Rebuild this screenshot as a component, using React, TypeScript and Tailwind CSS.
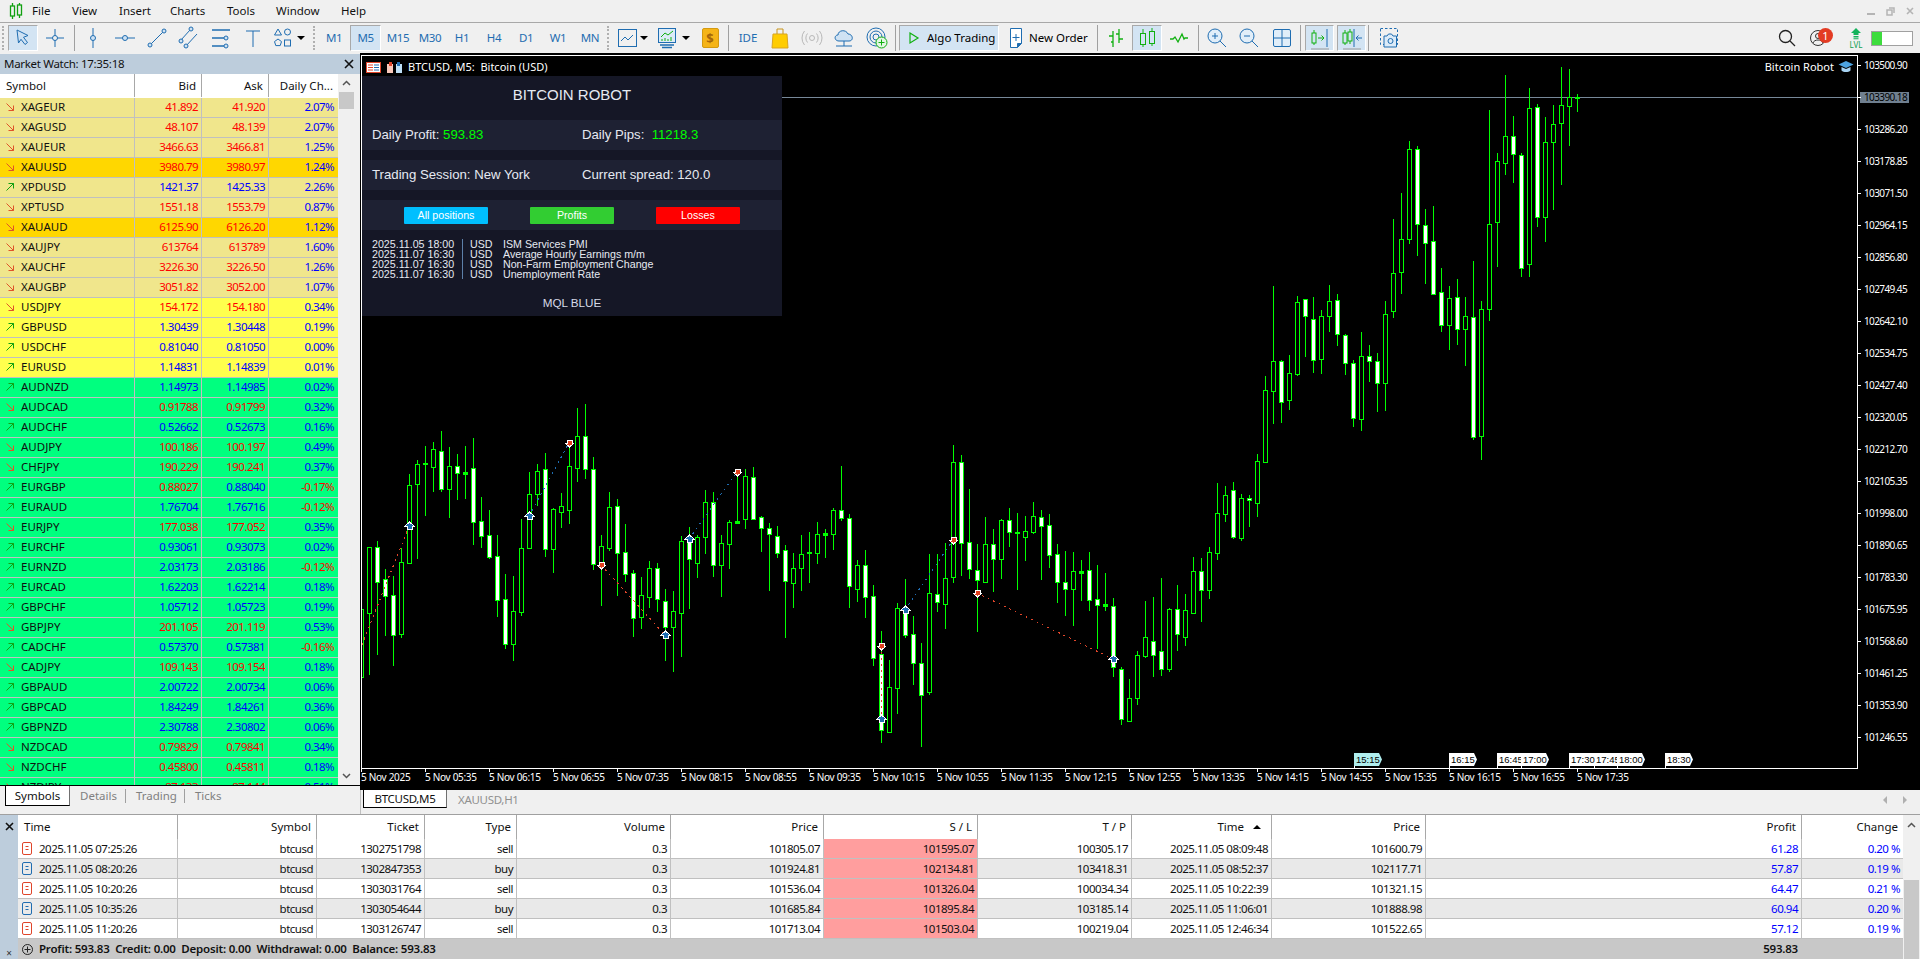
import type { ReactNode } from 'react';

const BLUE = '#1f6db1';
const GREEN = '#10b010';

// ---- market watch ----
type Quote = [string, string, string, string, 'u' | 'd', string, string?];
const QUOTES: Quote[] = [
  ['XAGEUR', '41.892', '41.920', '2.07%', 'd', 'bg-[#f0e68c]'],
  ['XAGUSD', '48.107', '48.139', '2.07%', 'd', 'bg-[#f0e68c]'],
  ['XAUEUR', '3466.63', '3466.81', '1.25%', 'd', 'bg-[#f0e68c]'],
  ['XAUUSD', '3980.79', '3980.97', '1.24%', 'd', 'bg-[#ffd700]'],
  ['XPDUSD', '1421.37', '1425.33', '2.26%', 'u', 'bg-[#f0e68c]'],
  ['XPTUSD', '1551.18', '1553.79', '0.87%', 'd', 'bg-[#f0e68c]'],
  ['XAUAUD', '6125.90', '6126.20', '1.12%', 'd', 'bg-[#ffd700]'],
  ['XAUJPY', '613764', '613789', '1.60%', 'd', 'bg-[#f0e68c]'],
  ['XAUCHF', '3226.30', '3226.50', '1.26%', 'd', 'bg-[#f0e68c]'],
  ['XAUGBP', '3051.82', '3052.00', '1.07%', 'd', 'bg-[#f0e68c]'],
  ['USDJPY', '154.172', '154.180', '0.34%', 'd', 'bg-[#ffff4d]'],
  ['GBPUSD', '1.30439', '1.30448', '0.19%', 'u', 'bg-[#ffff4d]'],
  ['USDCHF', '0.81040', '0.81050', '0.00%', 'u', 'bg-[#ffff4d]'],
  ['EURUSD', '1.14831', '1.14839', '0.01%', 'u', 'bg-[#ffff4d]'],
  ['AUDNZD', '1.14973', '1.14985', '0.02%', 'u', 'bg-[#00ff7f]'],
  ['AUDCAD', '0.91788', '0.91799', '0.32%', 'd', 'bg-[#00ff7f]'],
  ['AUDCHF', '0.52662', '0.52673', '0.16%', 'u', 'bg-[#00ff7f]'],
  ['AUDJPY', '100.186', '100.197', '0.49%', 'd', 'bg-[#00ff7f]'],
  ['CHFJPY', '190.229', '190.241', '0.37%', 'd', 'bg-[#00ff7f]'],
  ['EURGBP', '0.88027', '0.88040', '-0.17%', 'u', 'bg-[#00ff7f]', 'mixed'],
  ['EURAUD', '1.76704', '1.76716', '-0.12%', 'u', 'bg-[#00ff7f]'],
  ['EURJPY', '177.038', '177.052', '0.35%', 'd', 'bg-[#00ff7f]'],
  ['EURCHF', '0.93061', '0.93073', '0.02%', 'u', 'bg-[#00ff7f]'],
  ['EURNZD', '2.03173', '2.03186', '-0.12%', 'u', 'bg-[#00ff7f]'],
  ['EURCAD', '1.62203', '1.62214', '0.18%', 'u', 'bg-[#00ff7f]'],
  ['GBPCHF', '1.05712', '1.05723', '0.19%', 'u', 'bg-[#00ff7f]'],
  ['GBPJPY', '201.105', '201.119', '0.53%', 'd', 'bg-[#00ff7f]'],
  ['CADCHF', '0.57370', '0.57381', '-0.16%', 'u', 'bg-[#00ff7f]'],
  ['CADJPY', '109.143', '109.154', '0.18%', 'd', 'bg-[#00ff7f]'],
  ['GBPAUD', '2.00722', '2.00734', '0.06%', 'u', 'bg-[#00ff7f]'],
  ['GBPCAD', '1.84249', '1.84261', '0.36%', 'u', 'bg-[#00ff7f]'],
  ['GBPNZD', '2.30788', '2.30802', '0.06%', 'u', 'bg-[#00ff7f]'],
  ['NZDCAD', '0.79829', '0.79841', '0.34%', 'd', 'bg-[#00ff7f]'],
  ['NZDCHF', '0.45800', '0.45811', '0.18%', 'd', 'bg-[#00ff7f]'],
  ['NZDJPY', '87.133', '87.144', '0.51%', 'd', 'bg-[#00ff7f]'],
];

// ---- toolbox ----
const DEALS = [
  ['2025.11.05 07:25:26', 'btcusd', '1302751798', 'sell', '0.3', '101805.07', '101595.07', '100305.17', '2025.11.05 08:09:48', '101600.79', '61.28', '0.20 %'],
  ['2025.11.05 08:20:26', 'btcusd', '1302847353', 'buy', '0.3', '101924.81', '102134.81', '103418.31', '2025.11.05 08:52:37', '102117.71', '57.87', '0.19 %'],
  ['2025.11.05 10:20:26', 'btcusd', '1303031764', 'sell', '0.3', '101536.04', '101326.04', '100034.34', '2025.11.05 10:22:39', '101321.15', '64.47', '0.21 %'],
  ['2025.11.05 10:35:26', 'btcusd', '1303054644', 'buy', '0.3', '101685.84', '101895.84', '103185.14', '2025.11.05 11:06:01', '101888.98', '60.94', '0.20 %'],
  ['2025.11.05 11:20:26', 'btcusd', '1303126747', 'sell', '0.3', '101713.04', '101503.04', '100219.04', '2025.11.05 12:46:34', '101522.65', '57.12', '0.19 %'],
];
const DEAL_HEAD = ['Time', 'Symbol', 'Ticket', 'Type', 'Volume', 'Price', 'S / L', 'T / P', 'Time', 'Price', 'Profit', 'Change'];
const DEAL_GRID = 'grid grid-cols-[160px_139px_108px_92px_154px_153px_154px_154px_140px_154px_376px_101px]';

// ---- chart data: wickTop, wickBottom, bodyTop, bodyBottom, kind (0 hollow, 1 filled, 2 doji) ----
type Candle = [number, number, number, number, number];
const groupA: Candle[] = [
  [568, 772, 568, 772, 0], [382, 765, 382, 578, 0], [364, 705, 382, 485, 1], [447, 648, 478, 527, 1], [468, 738, 526, 644, 1],
  [385, 654, 427, 641, 0], [163, 430, 196, 428, 0], [120, 417, 133, 191, 0], [78, 288, 130, 131, 2], [66, 216, 88, 140, 0],
  [33, 216, 94, 206, 1], [81, 294, 139, 206, 0], [102, 240, 139, 158, 1], [78, 237, 157, 161, 2], [54, 375, 145, 305, 1],
  [231, 384, 304, 347, 1], [270, 417, 346, 410, 1], [346, 591, 409, 539, 1], [462, 687, 538, 671, 1], [468, 723, 574, 671, 0],
  [297, 588, 385, 575, 0], [156, 387, 223, 384, 0], [132, 258, 154, 222, 0], [99, 411, 148, 386, 1], [265, 459, 268, 386, 0],
  [220, 324, 259, 275, 0], [60, 312, 139, 269, 0], [-36, 186, 49, 145, 0], [-48, 177, 49, 148, 1], [111, 450, 148, 433, 1],
  [346, 558, 379, 436, 0], [216, 393, 262, 383, 0], [237, 528, 259, 398, 1], [312, 486, 397, 461, 1], [450, 651, 460, 593, 1],
  [471, 627, 526, 590, 0], [423, 564, 445, 530, 0], [429, 576, 445, 536, 1], [507, 723, 544, 620, 1], [513, 756, 574, 620, 0],
  [349, 711, 364, 578, 0], [321, 567, 364, 418, 1], [346, 474, 352, 428, 0], [210, 402, 247, 350, 0], [216, 471, 247, 436, 1],
  [346, 531, 370, 436, 0], [300, 447, 307, 371, 0], [160, 312, 304, 308, 2], [148, 327, 169, 298, 0], [141, 300, 172, 296, 1],
  [288, 396, 292, 325, 1], [309, 513, 325, 343, 1], [318, 414, 349, 400, 1], [376, 654, 391, 484, 1], [400, 564, 445, 488, 0],
  [346, 513, 403, 445, 0], [336, 489, 397, 398, 2], [306, 432, 343, 398, 0], [327, 414, 340, 344, 2], [265, 390, 271, 343, 0],
  [138, 303, 271, 295, 1], [282, 564, 295, 499, 1], [420, 546, 436, 508, 0],
];
const groupB: Candle[] = [
  [450, 654, 496, 590, 1], [556, 798, 589, 773, 1], [694, 1030, 763, 991, 1], [781, 996, 862, 996, 0], [610, 942, 625, 864, 0],
  [538, 714, 631, 705, 1], [649, 855, 703, 788, 1], [730, 1041, 790, 884, 1], [462, 885, 580, 876, 0], [462, 636, 583, 606, 1],
  [430, 687, 535, 611, 0], [135, 549, 187, 530, 0], [165, 528, 187, 428, 1], [267, 537, 427, 507, 1], [432, 696, 511, 539, 1],
  [351, 549, 433, 545, 0], [388, 576, 433, 476, 1], [357, 537, 361, 476, 0], [324, 441, 361, 395, 1], [339, 570, 396, 400, 2],
  [348, 483, 394, 410, 0], [306, 402, 349, 395, 0], [330, 540, 352, 377, 1], [342, 504, 376, 464, 1], [432, 609, 463, 545, 1],
  [453, 648, 547, 566, 1], [456, 678, 514, 566, 0], [480, 603, 514, 518, 2], [456, 633, 511, 599, 1], [495, 747, 598, 614, 1],
  [519, 633, 613, 617, 2], [594, 831, 619, 800, 1], [801, 975, 808, 956, 1], [837, 966, 895, 962, 0], [754, 915, 766, 893, 0],
  [603, 774, 712, 768, 0], [591, 831, 724, 764, 1], [534, 828, 754, 806, 1], [624, 816, 628, 806, 0], [555, 753, 628, 701, 1],
  [582, 738, 631, 710, 0], [471, 639, 514, 638, 0], [474, 666, 514, 569, 1], [441, 597, 457, 570, 0], [249, 480, 340, 458, 0],
  [258, 366, 286, 341, 0], [246, 417, 271, 410, 1], [282, 423, 295, 413, 0], [285, 381, 295, 301, 1], [162, 351, 184, 308, 0],
];
// right hand side, already in page pixels
const groupC: Candle[] = [
  [376, 462, 390, 462, 0], [286, 424, 361, 391, 0], [360, 423, 361, 402, 1], [355, 410, 373, 400, 0], [296, 376, 302, 374, 0],
  [299, 357, 299, 316, 1], [297, 373, 319, 360, 1], [310, 374, 316, 359, 0], [285, 332, 301, 316, 0], [294, 346, 300, 334, 1],
  [334, 375, 335, 363, 1], [360, 427, 363, 418, 1], [332, 431, 356, 419, 0], [345, 382, 356, 361, 1], [353, 412, 361, 383, 1],
  [301, 411, 314, 383, 0], [219, 318, 273, 311, 0], [193, 294, 239, 272, 0], [141, 244, 149, 239, 0], [146, 256, 149, 224, 1],
  [209, 284, 225, 243, 1], [206, 294, 241, 294, 1], [268, 332, 292, 325, 1], [286, 350, 298, 325, 0], [279, 345, 297, 329, 1],
  [297, 366, 316, 329, 0], [261, 440, 317, 437, 1], [301, 460, 309, 436, 0], [110, 321, 224, 309, 0], [153, 267, 161, 222, 0],
  [75, 175, 136, 163, 0], [116, 183, 136, 154, 1], [153, 277, 155, 268, 1], [88, 277, 108, 264, 0], [104, 227, 107, 217, 1],
  [117, 242, 142, 217, 0], [105, 210, 124, 142, 0], [67, 185, 105, 123, 0], [69, 146, 97, 106, 0], [94, 112, 97, 98, 2],
];
const toPage = (c: Candle, base: number): Candle => [
  Math.round(base + c[0] / 3), Math.round(base + c[1] / 3), Math.round(base + c[2] / 3), Math.round(base + c[3] / 3), c[4],
];
const CANDLES: Candle[] = [...groupA.map((c) => toPage(c, 420)), ...groupB.map((c) => toPage(c, 400)), ...groupC];

const PRICES = ['103500.90', '', '103286.20', '103178.85', '103071.50', '102964.15', '102856.80', '102749.45', '102642.10', '102534.75', '102427.40', '102320.05', '102212.70', '102105.35', '101998.00', '101890.65', '101783.30', '101675.95', '101568.60', '101461.25', '101353.90', '101246.55'];
const TIMES = ['5 Nov 2025', '5 Nov 05:35', '5 Nov 06:15', '5 Nov 06:55', '5 Nov 07:35', '5 Nov 08:15', '5 Nov 08:55', '5 Nov 09:35', '5 Nov 10:15', '5 Nov 10:55', '5 Nov 11:35', '5 Nov 12:15', '5 Nov 12:55', '5 Nov 13:35', '5 Nov 14:15', '5 Nov 14:55', '5 Nov 15:35', '5 Nov 16:15', '5 Nov 16:55', '5 Nov 17:35'];
const MARKERS: [number, string, string][] = [
  [1354, '15:15', '#afeeee'], [1449, '16:15', '#fff'], [1497, '16:45', '#fff'], [1521, '17:00', '#fff'],
  [1594, '17:45', '#fff'], [1569, '17:30', '#fff'], [1617, '18:00', '#fff'], [1665, '18:30', '#fff'],
];
const TRADE_LINES: [number, number, number, number, string][] = [
  [362, 645, 409, 526, '#e0452a'], [529, 516, 569, 443, BLUE], [601, 565, 665, 635, '#e0452a'], [689, 539, 737, 472, BLUE],
  [881, 646, 881, 719, '#e0452a'], [905, 610, 953, 540, BLUE], [977, 593, 1113, 659, '#e0452a'],
];
const UP_ARROWS = [[409, 526], [529, 516], [665, 635], [689, 539], [881, 719], [905, 610], [1113, 659]];
const DOWN_ARROWS = [[569, 443], [601, 565], [737, 472], [881, 646], [953, 540], [977, 593]];

function Ic({ children, w = 24, h = 24 }: { children: ReactNode; w?: number; h?: number }) {
  return (
    <svg width={w} height={h} viewBox={`0 0 ${w} ${h}`} fill="none" stroke={BLUE} strokeWidth="1">
      {children}
    </svg>
  );
}

function Slot({ className, children }: { className: string; children?: ReactNode }) {
  return <div className={`h-[26px] shrink-0 flex items-center justify-center ${className}`}>{children}</div>;
}

function Active({ className, children }: { className: string; children?: ReactNode }) {
  return (
    <div className={`h-[26px] shrink-0 flex items-center justify-center bg-[#d3e4f3] border border-t-[#a9a9a9] border-l-[#a9a9a9] border-r-white border-b-white ${className}`}>
      {children}
    </div>
  );
}

function Sep() {
  return (
    <div className="w-[5px] h-[26px] shrink-0 flex justify-center">
      <div className="w-px h-full bg-[#a0a0a0]" />
    </div>
  );
}

function Grip({ className }: { className: string }) {
  return <div className={`h-[24px] w-[2px] shrink-0 border-l-2 border-dotted border-[#b0b0b0] ${className}`} />;
}

function Caret() {
  return <div className="w-0 h-0 border-x-[4px] border-x-transparent border-t-[4px] border-t-black" />;
}

function Dot({ cx, cy, r = 2 }: { cx: number; cy: number; r?: number }) {
  return <circle cx={cx} cy={cy} r={r} fill="#cfe2f3" />;
}

function TwoCandles({ color = GREEN }: { color?: string }) {
  return (
    <>
      <path d="M6 3v4M6 18v3M15 2v3M15 17v3" stroke={color} />
      <rect x="3.5" y="7.5" width="5" height="11" stroke={color} />
      <rect x="12.5" y="5.5" width="5" height="12" stroke={color} />
    </>
  );
}

function Toolbar() {
  return (
    <div className="h-[30px] flex items-center shrink-0 bg-[#f0f0f0] text-[11.5px]">
      <Grip className="ml-[2px] mr-[4px]" />
      <Active className="w-[30px]">
        <Ic><path d="M6 4l11 5.5-4.5 1.8 4 5.2-2.5 2-4-5.2-2.5 3.7z" fill="#cfe2f3" /></Ic>
      </Active>
      <Slot className="w-[34px]">
        <Ic><path d="M12 3v18M3 12h18" /><circle cx="12" cy="12" r="2.5" fill="#f0f0f0" /></Ic>
      </Slot>
      <Sep />
      <Slot className="w-[32px]"><Ic><path d="M12 2v20" /><Dot cx={12} cy={12} r={2.5} /></Ic></Slot>
      <Slot className="w-[32px]"><Ic><path d="M2 12h20" /><Dot cx={12} cy={12} r={2.5} /></Ic></Slot>
      <Slot className="w-[32px]"><Ic><path d="M6 18L18 6" /><Dot cx={5} cy={19} /><Dot cx={19} cy={5} /></Ic></Slot>
      <Slot className="w-[32px]"><Ic><path d="M4 14L13 4M9 20L20 8" /><Dot cx={4} cy={15} /><Dot cx={14} cy={3} /><Dot cx={9} cy={20} /></Ic></Slot>
      <Slot className="w-[32px]"><Ic><path d="M3 4h18M3 12h12M3 20h12" strokeWidth="1.3" /><Dot cx={17} cy={12} /><Dot cx={17} cy={20} /></Ic></Slot>
      <Slot className="w-[32px]"><Ic><path d="M5 5h14M12 5v16" /></Ic></Slot>
      <Slot className="w-[28px]">
        <Ic>
          <path d="M7 3l3.5 6h-7z" />
          <circle cx="16.5" cy="6" r="3" />
          <path d="M7 13l3.5 2.6-1.3 4H4.8l-1.3-4z" />
          <rect x="13.5" y="14" width="6" height="6" />
        </Ic>
      </Slot>
      <Slot className="w-[8px]"><Caret /></Slot>
      <Grip className="ml-[8px] mr-[3px]" />
      {['M1', 'M5', 'M15', 'M30', 'H1', 'H4', 'D1', 'W1', 'MN'].map((t) =>
        t === 'M5' ? (
          <Active key={t} className="w-[31px] mr-[1px] tracking-[-0.4px] text-[#1f6db1]">{t}</Active>
        ) : (
          <Slot key={t} className="w-[32px] tracking-[-0.4px] text-[#1f6db1]">{t}</Slot>
        )
      )}
      <Grip className="ml-[1px] mr-[5px]" />
      <Slot className="w-[26px]"><Ic><rect x="3.5" y="3.5" width="18" height="17" /><path d="M6 15l4-4 3 3 5-5" /></Ic></Slot>
      <Slot className="w-[8px]"><Caret /></Slot>
      <div className="w-[4px] shrink-0" />
      <Slot className="w-[30px]">
        <Ic>
          <rect x="3.5" y="2.5" width="17" height="14" fill="#dcebf8" />
          <path d="M6 11l4-4 3 2 5-4" stroke={GREEN} />
          <path d="M7 15v-2M10 15v-3M13 15v-2M16 15v-4" stroke={GREEN} />
          <path d="M5 19h14M7 21.5h10" strokeWidth="1.3" />
        </Ic>
      </Slot>
      <Slot className="w-[8px]"><Caret /></Slot>
      <div className="w-[4px] shrink-0" />
      <Slot className="w-[32px]">
        <div className="w-[17px] h-[20px] rounded-[2px] bg-[#f5b417] border border-[#d49a10] text-[13px] font-bold text-[#a5660a] flex items-center justify-center leading-none">$</div>
      </Slot>
      <Sep />
      <div className="w-[1px] shrink-0" />
      <Slot className="w-[32px] text-[#1f6db1]">IDE</Slot>
      <Slot className="w-[32px]">
        <Ic><path d="M5 8h14l1 14H4z" fill="#ffcc00" stroke="#d9a520" /><path d="M9 8V3h6v5" stroke="#c8941a" /></Ic>
      </Slot>
      <Slot className="w-[32px]">
        <Ic>
          <g stroke="#b8b8b8">
            <circle cx="12" cy="12" r="2.5" />
            <path d="M7.5 7.5a7 7 0 0 0 0 9M16.5 7.5a7 7 0 0 1 0 9M4.5 5a11 11 0 0 0 0 14M19.5 5a11 11 0 0 1 0 14" />
          </g>
        </Ic>
      </Slot>
      <Slot className="w-[32px]">
        <Ic><path d="M7 15c-5 0-5-6-1-6 0-5 8-6 10-1 5 0 6 7 1 7z" fill="#cfe2f3" /><path d="M12 15v5M4 20h16" /></Ic>
      </Slot>
      <Slot className="w-[33px]">
        <Ic>
          <circle cx="11" cy="11" r="9" /><circle cx="11" cy="11" r="6" /><circle cx="11" cy="11" r="3" />
          <circle cx="16.5" cy="16.5" r="5.5" fill="#e3f6e3" stroke={GREEN} />
          <path d="M16.5 13.5v6M13.5 16.5h6" stroke={GREEN} />
        </Ic>
      </Slot>
      <Sep />
      <div className="w-[1px] shrink-0" />
      <div className="w-[100px] h-[26px] shrink-0 flex items-center bg-[#d3e4f3] border border-t-[#a9a9a9] border-l-[#a9a9a9] border-r-white border-b-white">
        <div className="w-[27px] flex justify-center">
          <svg width="12" height="14" viewBox="0 0 12 14" fill="none" stroke={GREEN} strokeWidth="1.2"><path d="M2 2l8 5-8 5z" /></svg>
        </div>
        <span className="text-black whitespace-nowrap">Algo Trading</span>
      </div>
      <div className="w-[8px] shrink-0" />
      <div className="w-[88px] h-[26px] shrink-0 flex items-center">
        <Ic w={18}>
          <path d="M3.5 2.5h11v15l-4 4h-7z" fill="#fff" />
          <path d="M10.5 21.5v-4h4" fill={BLUE} />
          <path d="M9 8v7M5.500 11.500h7" />
        </Ic>
        <span className="ml-[4px] text-black whitespace-nowrap">New Order</span>
      </div>
      <Sep />
      <Slot className="w-[32px]"><Ic><path d="M9 5v16M9 10H5M9 16h-2M15 3v14M15 8h-3M15 13h4" stroke={GREEN} strokeWidth="1.3" /></Ic></Slot>
      <Active className="w-[30px]"><Ic w={21}><TwoCandles /></Ic></Active>
      <Slot className="w-[34px]"><Ic><path d="M3 13h3l2-2 3 5 4-8 2 5 1-1h3" stroke={GREEN} strokeWidth="1.3" /></Ic></Slot>
      <Sep />
      <Slot className="w-[32px]"><Ic><circle cx="10" cy="10" r="7" fill="#e1eef9" /><path d="M15 15l6 6M10 7v6M7 10h6" /></Ic></Slot>
      <Slot className="w-[32px]"><Ic><circle cx="10" cy="10" r="7" fill="#e1eef9" /><path d="M15 15l6 6M7 10h6" /></Ic></Slot>
      <Slot className="w-[33px]"><Ic><rect x="3.500" y="3.500" width="17" height="17" rx="1.500" fill="#e1eef9" /><path d="M12 4v16M4 12h16" /></Ic></Slot>
      <Sep />
      <div className="w-[2px] shrink-0" />
      <Active className="w-[29px]">
        <Ic>
          <path d="M6 4v3M6 17v2" stroke={GREEN} /><rect x="4" y="7" width="4" height="10" stroke={GREEN} />
          <path d="M10 12h6M13.500 9.500l2.500 2.500-2.500 2.500" stroke={GREEN} /><path d="M19 3v18" />
          <path d="M3 23h18" stroke="#999" />
        </Ic>
      </Active>
      <div className="w-[3px] shrink-0" />
      <Active className="w-[29px]">
        <Ic>
          <path d="M5 4v3M5 17v2M10 3v3M10 15v3" stroke={GREEN} /><rect x="3" y="7" width="4" height="10" stroke={GREEN} /><rect x="8" y="6" width="4" height="9" stroke={GREEN} />
          <path d="M14 3v18" /><path d="M22 12h-6M18.500 9.500L16 12l2.500 2.500" />
          <path d="M3 23h18" stroke="#999" />
        </Ic>
      </Active>
      <Sep />
      <Slot className="w-[36px]">
        <Ic w={24} h={26}>
          <rect x="3.500" y="3.500" width="17" height="16" strokeDasharray="2.500 2" />
          <path d="M7 11h3l1.500-2h3l1.500 2h3.500v11H7z" fill="#dcebf8" /><circle cx="13.500" cy="16" r="2.500" />
        </Ic>
      </Slot>
      <div className="flex-1" />
      <Slot className="w-[26px]">
        <svg width="20" height="20" viewBox="0 0 20 20" fill="none" stroke="#222" strokeWidth="1.300"><circle cx="8.500" cy="8.500" r="6" /><path d="M13 13l5 5" /></svg>
      </Slot>
      <div className="w-[4px] shrink-0" />
      <div className="relative w-[28px] h-[26px] shrink-0 flex items-center justify-center">
        <svg width="18" height="18" viewBox="0 0 18 18" fill="none" stroke="#333" strokeWidth="1"><circle cx="9" cy="9" r="7.500" /><circle cx="9" cy="7" r="2.500" /><path d="M4 14c1-4 9-4 10 0" /></svg>
        <div className="absolute left-[14px] top-[3px] w-[15px] h-[15px] rounded-full bg-[#e33b23] text-white text-[11px] leading-[15px] text-center">1</div>
      </div>
      <div className="w-[14px] shrink-0" />
      <div className="w-[20px] h-[26px] shrink-0 flex flex-col items-center justify-center">
        <svg width="12" height="12" viewBox="0 0 12 12" fill="#12b35a"><path d="M6 0l5 5H8.500v2h-5V5H1zM3.500 8h5v1.500h-5zM3.500 10.300h5v1h-5z" /></svg>
        <span className="text-[8px] leading-[9px] text-[#12a050]">LVL</span>
      </div>
      <div className="w-[5px] shrink-0" />
      <div className="w-[42px] h-[15px] mr-[7px] shrink-0 bg-white border border-[#a0a0a0]">
        <div className="w-[10px] h-full bg-[#3ddc3d]" />
      </div>
    </div>
  );
}

function Arrow({ dir }: { dir: 'u' | 'd' }) {
  return dir === 'u' ? (
    <svg width="8" height="8" viewBox="0 0 8 8" fill="none" stroke="#12a012" strokeWidth="1"><path d="M.5 7.500l7-7M2.500.500h5v5" /></svg>
  ) : (
    <svg width="8" height="8" viewBox="0 0 8 8" fill="none" stroke="#e0542a" strokeWidth="1"><path d="M.5.500l7 7M2.500 7.500h5v-5" /></svg>
  );
}

function MarketWatch() {
  return (
    <div className="h-[732px] flex flex-col overflow-hidden text-[11.5px]">
      <div className="h-[20px] mt-px shrink-0 bg-[#bdcddc] flex items-center justify-between pl-[4px] pr-[6px] pb-[1px]">
        <span className="text-[#111] tracking-[-0.3px]">Market Watch: 17:35:18</span>
        <svg width="10" height="10" viewBox="0 0 10 10" stroke="#111" strokeWidth="1.600"><path d="M1 1l8 8M9 1L1 9" /></svg>
      </div>
      <div className="flex flex-1 min-h-0">
        <div className="w-[338px] shrink-0">
          <div className="h-[24px] flex bg-white text-[#111] pb-[1px]">
            <div className="w-[135px] border-r border-[#a8a8a8] pl-[6px] flex items-center">Symbol</div>
            <div className="w-[67px] border-r border-[#a8a8a8] pr-[5px] flex items-center justify-end">Bid</div>
            <div className="w-[67px] border-r border-[#a8a8a8] pr-[5px] flex items-center justify-end">Ask</div>
            <div className="w-[69px] pr-[5px] flex items-center justify-end">Daily Ch...</div>
          </div>
          {QUOTES.map(([sym, bid, ask, chg, dir, bg, mixed]) => (
            <div key={sym} className={`h-[20px] flex border-b border-[#c0c0c0] tracking-[-0.55px] ${bg}`}>
              <div className="w-[135px] border-r border-[#c0c0c0] pl-[6px] pb-[1px] flex items-center text-[#111]">
                <Arrow dir={dir} />
                <span className="ml-[7px] tracking-normal">{sym}</span>
              </div>
              <div className={`w-[67px] border-r border-[#c0c0c0] pr-[3px] pb-[1px] flex items-center justify-end ${dir === 'u' && !mixed ? 'text-[#0000ff]' : 'text-[#ff0000]'}`}>{bid}</div>
              <div className={`w-[67px] border-r border-[#c0c0c0] pr-[3px] pb-[1px] flex items-center justify-end ${dir === 'u' ? 'text-[#0000ff]' : 'text-[#ff0000]'}`}>{ask}</div>
              <div className={`w-[69px] pr-[4px] pb-[1px] flex items-center justify-end ${chg.startsWith('-') ? 'text-[#ff0000]' : 'text-[#0000ff]'}`}>{chg}</div>
            </div>
          ))}
        </div>
        <div className="w-[17px] shrink-0 flex flex-col items-center bg-[#f0f0f0]">
          <svg className="mt-[6px]" width="9" height="6" viewBox="0 0 9 6" fill="none" stroke="#555" strokeWidth="1.500"><path d="M1 5l3.500-3.500L8 5" /></svg>
          <div className="mt-[6px] w-[15px] h-[17px] bg-[#c8c8c8]" />
          <div className="flex-1" />
          <svg className="mb-[6px]" width="9" height="6" viewBox="0 0 9 6" fill="none" stroke="#555" strokeWidth="1.500"><path d="M1 1l3.500 3.500L8 1" /></svg>
        </div>
      </div>
    </div>
  );
}

function LeftTabs() {
  return (
    <div className="flex-1 border-t border-black flex items-start text-[11.5px] pl-[5px]">
      <div className="w-[65px] h-[20px] bg-white border-x border-b border-black border-r-[#707070] flex items-center justify-center text-[#111]">Symbols</div>
      <div className="h-[20px] flex items-center text-[#808080]">
        <span className="ml-[10px]">Details</span>
        <span className="ml-[8px] w-px h-[14px] bg-[#a0a0a0]" />
        <span className="ml-[10px]">Trading</span>
        <span className="ml-[7px] w-px h-[14px] bg-[#a0a0a0]" />
        <span className="ml-[10px]">Ticks</span>
      </div>
    </div>
  );
}

function ChartCanvas() {
  const text = { fontFamily: "'Noto Sans', sans-serif", fontSize: 10, fill: '#fff' };
  return (
    <svg className="absolute left-0 top-0" width="1560" height="737" viewBox="360 53 1560 737">
      <defs>
        <clipPath id="plot"><rect x="362" y="56" width="1495" height="712" /></clipPath>
      </defs>
      <g clipPath="url(#plot)" shapeRendering="crispEdges">
        <rect x="362" y="97" width="1495" height="1" fill="#778899" />
        {CANDLES.map(([wt, wb, bt, bb, kind], i) => {
          const x = 361 + 8 * i;
          return (
            <g key={i}>
              <rect x={x} y={wt} width="1" height={wb - wt} fill="#00ff00" />
              <rect x={x - 2} y={bt} width="5" height={Math.max(bb - bt + 1, 1)} fill="#00ff00" />
              {kind !== 2 && bb - bt > 1 && (
                <rect x={x - 1} y={bt + 1} width="3" height={bb - bt - 1} fill={kind === 1 ? '#fff' : '#000'} />
              )}
            </g>
          );
        })}
        {TRADE_LINES.map(([x1, y1, x2, y2, c], i) => (
          <line key={i} x1={x1} y1={y1} x2={x2} y2={y2} stroke={c} strokeDasharray="2 4" />
        ))}
      </g>
      {UP_ARROWS.map(([x, y], i) => (
        <path key={i} d={`M${x + 0.5} ${y - 4}l4.500 4h-2v3h-5v-3h-2z`} fill={BLUE} stroke="#fff" shapeRendering="crispEdges" />
      ))}
      {DOWN_ARROWS.map(([x, y], i) => (
        <path key={i} d={`M${x + 0.5} ${y + 4}l4.500-4h-2v-3h-5v3h-2z`} fill="#e0401f" stroke="#fff" shapeRendering="crispEdges" />
      ))}
      <rect x="361.500" y="55.500" width="1496" height="713" fill="none" stroke="#fff" shapeRendering="crispEdges" />
      {PRICES.map((p, i) =>
        p ? (
          <g key={p}>
            <rect x="1858" y={65 + 32 * i} width="3" height="1" fill="#fff" />
            <text x="1864" y={69 + 32 * i} letterSpacing="-0.6" {...text}>{p}</text>
          </g>
        ) : null
      )}
      <rect x="1860" y="92" width="49" height="11" fill="#708090" />
      <rect x="1858" y="97" width="3" height="1" fill="#fff" />
      <text x="1864" y="101" letterSpacing="-0.6" {...text} fill="#000">103390.18</text>
      {TIMES.map((t, i) => (
        <g key={t}>
          <rect x={361 + 64 * i} y="768" width="1" height="4" fill="#fff" />
          <text x={361 + 64 * i} y="781" letterSpacing="-0.3" {...text}>{t}</text>
        </g>
      ))}
      {MARKERS.map(([x, t, bg]) => (
        <g key={t}>
          <rect x={x} y="753" width="1" height="15" fill="#fff" />
          <path d={`M${x} 753h25l3 6.500-3 6.500h-25z`} fill={bg} />
          <text x={x + 2} y="763" fontFamily="'Liberation Sans', sans-serif" fontSize="9.500" fill="#000">{t}</text>
        </g>
      ))}
    </svg>
  );
}

function ChartHeader() {
  return (
    <div className="absolute left-[6px] top-[6px] h-[16px] flex items-center">
      <svg width="15" height="11" viewBox="0 0 15 11">
        <rect x=".5" y=".5" width="14" height="10" fill="#fff" stroke="#e0452a" />
        <path d="M2 3h5M2 5.500h5M2 8h5" stroke="#e0452a" />
        <path d="M8 3h5M8 5.500h5M8 8h5" stroke={BLUE} />
      </svg>
      <svg className="ml-[6px]" width="15" height="11" viewBox="0 0 15 11">
        <rect x="0" y="2" width="6" height="9" fill="#f9c9bb" />
        <rect x="2" y="0" width="3" height="4" fill="#e0452a" />
        <rect x="9" y="2" width="6" height="9" fill="#bfe0f7" />
        <rect x="10" y="0" width="3" height="4" fill={BLUE} />
      </svg>
      <span className="ml-[6px] text-[11px] text-white whitespace-pre">BTCUSD, M5:  Bitcoin (USD)</span>
    </div>
  );
}

function RobotPanel() {
  return (
    <div className="absolute left-[2px] top-[23px] w-[420px] h-[240px] bg-[#151726] flex flex-col text-[#e6eaf2] font-['Liberation_Sans',Arial,sans-serif]">
      <div className="h-[44px] pb-[6px] shrink-0 flex items-center justify-center text-[15px]">BITCOIN ROBOT</div>
      <div className="h-[30px] shrink-0 bg-[#1e2133] flex items-center text-[13.2px] pl-[10px]">
        <span className="w-[210px] whitespace-pre">Daily Profit: <span className="text-[#00ff00]">593.83</span></span>
        <span className="whitespace-pre">Daily Pips:  <span className="text-[#00ff00]">11218.3</span></span>
      </div>
      <div className="h-[10px] shrink-0" />
      <div className="h-[30px] shrink-0 bg-[#1e2133] flex items-center text-[13.2px] pl-[10px]">
        <span className="w-[210px]">Trading Session: New York</span>
        <span>Current spread: 120.0</span>
      </div>
      <div className="h-[10px] shrink-0" />
      <div className="h-[30px] shrink-0 bg-[#1e2133] flex items-center pl-[42px] gap-[42px] text-[10.67px] text-white">
        <div className="w-[84px] h-[17px] rounded-[1px] bg-[#00bfff] flex items-center justify-center">All positions</div>
        <div className="w-[84px] h-[17px] rounded-[1px] bg-[#32cd32] flex items-center justify-center">Profits</div>
        <div className="w-[84px] h-[17px] rounded-[1px] bg-[#ff0000] flex items-center justify-center">Losses</div>
      </div>
      <div className="mt-[9px] h-[40px] shrink-0 flex pl-[10px] text-[10.67px] leading-[10px]">
        <div className="w-[91px] border-r border-[#5d80a8]">
          <div>2025.11.05 18:00</div>
          <div>2025.11.07 16:30</div>
          <div>2025.11.07 16:30</div>
          <div>2025.11.07 16:30</div>
        </div>
        <div className="w-[40px] pl-[7px]">
          <div>USD</div>
          <div>USD</div>
          <div>USD</div>
          <div>USD</div>
        </div>
        <div>
          <div>ISM Services PMI</div>
          <div>Average Hourly Earnings m/m</div>
          <div>Non-Farm Employment Change</div>
          <div>Unemployment Rate</div>
        </div>
      </div>
      <div className="flex-1 pt-[11px] flex items-center justify-center text-[11.7px] text-[#d5d9e6]">MQL BLUE</div>
    </div>
  );
}

function Chart() {
  return (
    <div className="relative h-[737px] shrink-0 bg-black overflow-hidden">
      <ChartCanvas />
      <ChartHeader />
      <RobotPanel />
      <div className="absolute right-[66px] top-[5px] h-[18px] flex items-center">
        <span className="text-[11px] text-white">Bitcoin Robot</span>
        <svg className="ml-[4px]" width="16" height="14" viewBox="0 0 16 14">
          <path d="M8 1l7.500 3.500L8 8 .5 4.500z" fill="#4da3e0" />
          <path d="M3.500 7v3.500c2 2 7 2 9 0V7L8 9z" fill="#a8d4f3" />
        </svg>
      </div>
    </div>
  );
}

function ChartTabs() {
  return (
    <div className="flex-1 flex items-start border-l border-[#c0c0c0] text-[11.5px] tracking-[-0.3px] pl-[2px]">
      <div className="w-[84px] h-[18px] bg-white border-x border-b border-black border-r-[#707070] flex items-center justify-center text-[#111]">BTCUSD,M5</div>
      <span className="ml-[11px] h-[20px] flex items-center text-[#909090]">XAUUSD,H1</span>
      <div className="flex-1" />
      <div className="h-[20px] flex items-center gap-[16px] mr-[13px]">
        <div className="w-0 h-0 border-y-[4px] border-y-transparent border-r-[4px] border-r-[#b0b0b0]" />
        <div className="w-0 h-0 border-y-[4px] border-y-transparent border-l-[4px] border-l-[#b0b0b0]" />
      </div>
    </div>
  );
}

function DealIcon({ type }: { type: string }) {
  const c = type === 'sell' ? '#e0452a' : BLUE;
  return (
    <svg width="10" height="13" viewBox="0 0 10 13" fill="none" stroke={c} strokeWidth="1">
      <rect x=".5" y=".5" width="9" height="12" rx="1.500" />
      <path d="M3.500 4.500h3M3.500 7.500h3" />
    </svg>
  );
}

function Toolbox() {
  return (
    <div className="flex-1 flex min-h-0 border-t border-[#a0a0a0]">
      <div className="w-[18px] shrink-0 bg-[#bdcddc] flex flex-col items-center justify-between pt-[7px] pb-[1px]">
        <svg width="9" height="9" viewBox="0 0 9 9" stroke="#111" strokeWidth="1.600"><path d="M1 1l7 7M8 1L1 8" /></svg>
        <span className="text-[10px] leading-[10px] text-[#333]">×</span>
      </div>
      <div className="w-[1885px] shrink-0 flex flex-col bg-white text-[11.5px] text-[#111] tracking-[-0.5px]">
        <div className={`${DEAL_GRID} h-[24px] shrink-0 tracking-normal`}>
          {DEAL_HEAD.map((h, i) => (
            <div key={i} className={`border-r border-[#a8a8a8] flex items-center last:border-r-0 ${i === 0 ? 'pl-[6px]' : i === 8 ? 'justify-end pr-[10px]' : 'justify-end pr-[5px]'}`}>
              {h}
              {i === 8 && <div className="ml-[9px] w-0 h-0 border-x-[4px] border-x-transparent border-b-[4px] border-b-black" />}
            </div>
          ))}
        </div>
        {DEALS.map((row, r) => (
          <div key={r} className={`${DEAL_GRID} h-[20px] shrink-0 border-b border-[#c0c0c0] ${r % 2 ? 'bg-[#e9e9e9]' : 'bg-white'}`}>
            {row.map((v, i) => (
              <div
                key={i}
                className={`border-r border-[#c0c0c0] flex items-center last:border-r-0 ${i === 0 ? 'pl-[4px]' : 'justify-end pr-[3px]'} ${i === 6 ? 'bg-[#ff9e9e]' : ''} ${i >= 10 ? 'text-[#0000ff]' : ''}`}
              >
                {i === 0 && <span className="mr-[7px] flex"><DealIcon type={row[3]} /></span>}
                {v}
              </div>
            ))}
          </div>
        ))}
        <div className="flex-1 bg-[#c8c8c8] flex items-center font-semibold tracking-[-0.2px] pl-[4px] pr-[105px]">
          <svg width="11" height="11" viewBox="0 0 11 11" fill="none" stroke="#222"><circle cx="5.500" cy="5.500" r="5" /><path d="M5.500 2.500v6M2.500 5.500h6" /></svg>
          <span className="ml-[6px] whitespace-pre">Profit: 593.83  Credit: 0.00  Deposit: 0.00  Withdrawal: 0.00  Balance: 593.83</span>
          <span className="ml-auto">593.83</span>
        </div>
      </div>
      <div className="flex-1 flex flex-col items-center bg-[#f0f0f0]">
        <svg className="mt-[7px]" width="9" height="6" viewBox="0 0 9 6" fill="none" stroke="#555" strokeWidth="1.500"><path d="M1 5l3.500-3.500L8 5" /></svg>
        <div className="mt-[52px] w-[15px] flex-1 bg-[#c8c8c8]" />
      </div>
    </div>
  );
}

export default function App() {
  return (
    <div className="w-[1920px] h-[959px] overflow-hidden flex flex-col bg-[#f0f0f0] font-['Noto_Sans',sans-serif]">
      <div className="h-[23px] shrink-0 border-b border-[#a8a8a8] flex items-center text-[11.5px] text-[#111]">
        <div className="w-[32px] flex justify-center">
          <svg width="14" height="16" viewBox="0 0 14 16" fill="none" stroke="#10a010" strokeWidth="1.300">
            <path d="M3.500 0v3M3.500 13v3M10.500 0v2M10.500 12v3" />
            <rect x="1.500" y="3" width="4" height="10" />
            <rect x="8.500" y="2" width="4" height="10" />
          </svg>
        </div>
        <span className="w-[40px]">File</span>
        <span className="w-[47px]">View</span>
        <span className="w-[51px]">Insert</span>
        <span className="w-[57px]">Charts</span>
        <span className="w-[49px]">Tools</span>
        <span className="w-[65px]">Window</span>
        <span>Help</span>
        <div className="flex-1" />
        <div className="flex items-center gap-[11px] pr-[6px] text-[#b0b0b0]">
          <span className="w-[8px] h-[2px] mt-[6px] bg-[#b4b4b4]" />
          <svg width="9" height="9" viewBox="0 0 9 9" fill="none" stroke="#b4b4b4" strokeWidth="1.500"><rect x="1" y="3" width="5" height="5" /><path d="M3 1h5v5" /></svg>
          <svg width="8" height="8" viewBox="0 0 8 8" stroke="#b4b4b4" strokeWidth="1.600"><path d="M1 1l6 6M7 1L1 7" /></svg>
        </div>
      </div>
      <Toolbar />
      <div className="h-[761px] shrink-0 flex">
        <div className="w-[360px] shrink-0 flex flex-col">
          <MarketWatch />
          <LeftTabs />
        </div>
        <div className="flex-1 flex flex-col">
          <Chart />
          <ChartTabs />
        </div>
      </div>
      <Toolbox />
    </div>
  );
}
